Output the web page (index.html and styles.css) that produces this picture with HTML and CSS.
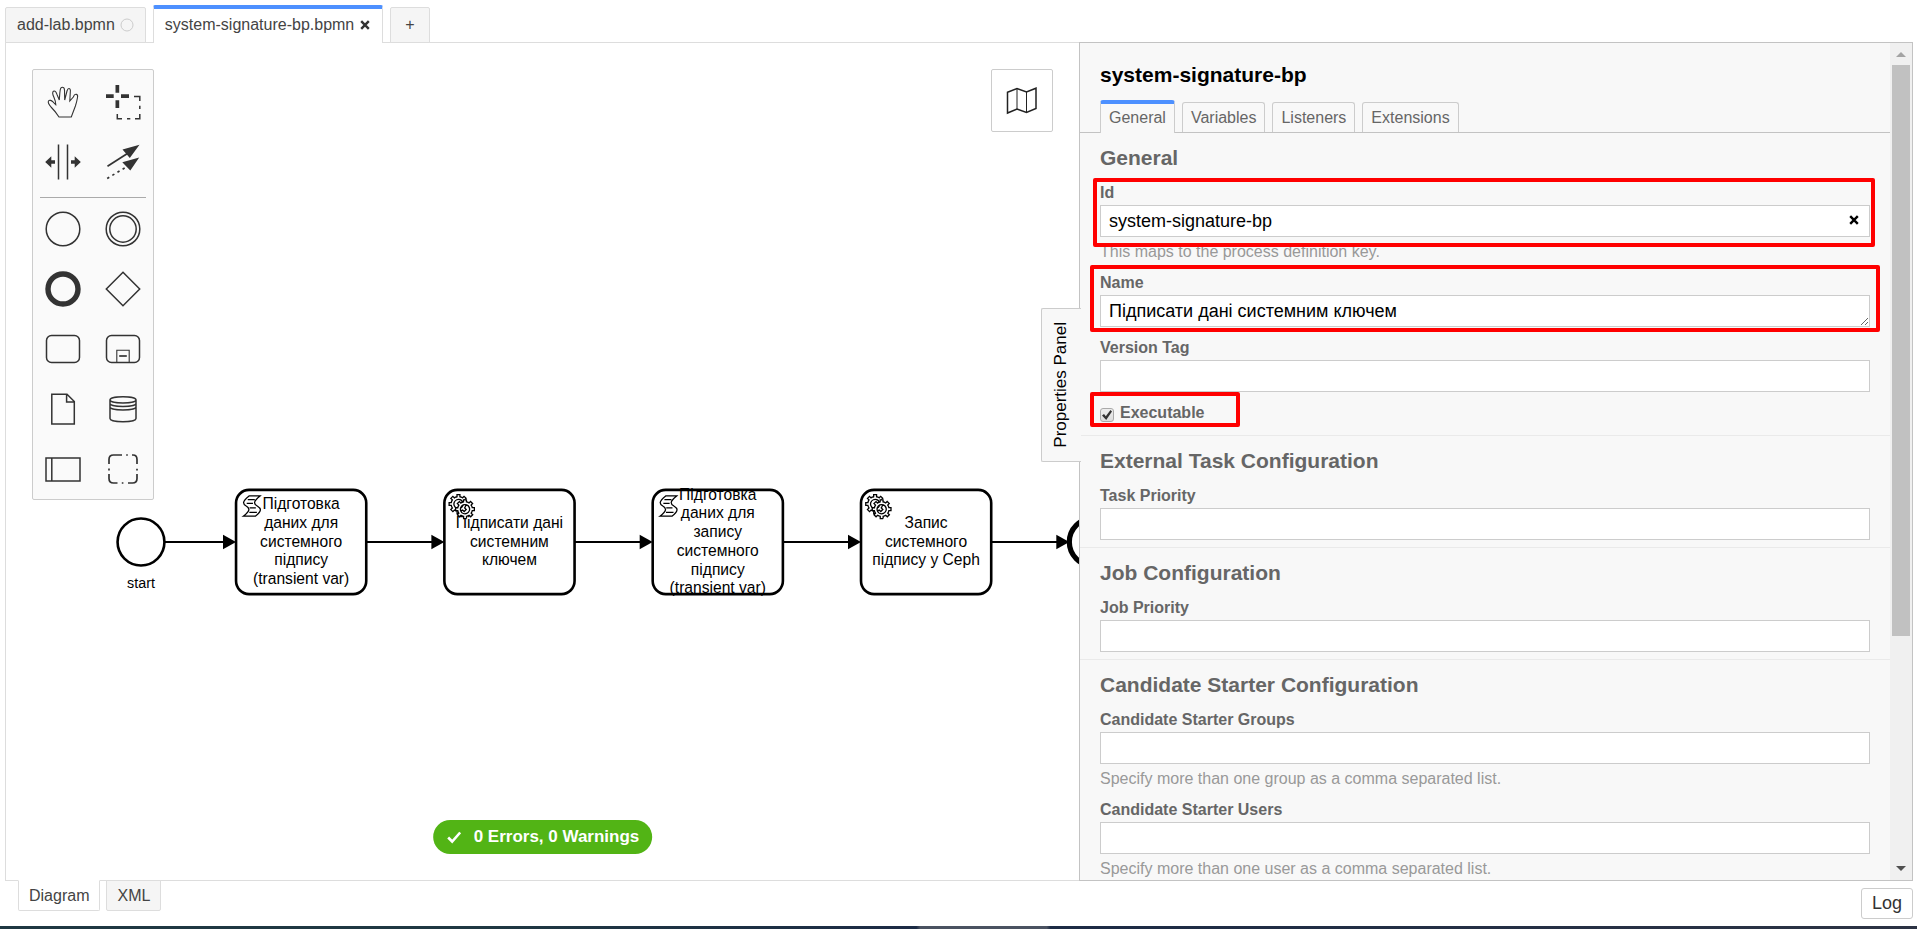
FILE: index.html
```html
<!DOCTYPE html>
<html lang="en">
<head>
<meta charset="utf-8">
<title>system-signature-bp.bpmn</title>
<link rel="stylesheet" href="styles.css">
</head>
<body>
<div class="app">
  <nav class="file-tabs" aria-label="Open files">
    <button class="file-tab" type="button">add-lab.bpmn
      <svg class="dirty-mark" viewBox="0 0 14 14" aria-hidden="true"><circle cx="7" cy="7" r="6"/></svg>
    </button>
    <button class="file-tab file-tab-active" type="button">system-signature-bp.bpmn
      <svg class="close-mark" viewBox="0 0 10 10" aria-hidden="true"><path d="M1.200 1.200 8.800 8.800M8.800 1.200 1.200 8.800"/></svg>
    </button>
    <button class="file-tab file-tab-add" type="button" aria-label="New file">+</button>
  </nav>

  <main class="workspace">
    <section class="canvas">
      <svg class="diagram" aria-label="Process diagram">
        <defs>
          <path id="gear" d="m 0,0 v -1.71335 c 0.352326,-0.0705 0.703932,-0.17838 1.047628,-0.32133 0.344416,-0.14465 0.665822,-0.32133 0.966377,-0.52145 l 1.19431,1.18005 1.567487,-1.57688 -1.195028,-1.18014 c 0.403376,-0.61394 0.683079,-1.29908 0.825447,-2.01824 l 1.622133,-0.01 v -2.2196 l -1.636514,0.01 c -0.07333,-0.35153 -0.178319,-0.70024 -0.323564,-1.04372 -0.145244,-0.34406 -0.321407,-0.6644 -0.522735,-0.96217 l 1.131035,-1.13631 -1.583305,-1.56293 -1.129598,1.13589 c -0.614052,-0.40108 -1.302883,-0.68093 -2.022633,-0.82247 l 0.0093,-1.61852 h -2.241173 l 0.0042,1.63124 c -0.353763,0.0736 -0.705369,0.17977 -1.049785,0.32371 -0.344415,0.14437 -0.665102,0.32092 -0.9635006,0.52006 l -1.1698628,-1.15823 -1.5667691,1.5792 1.1684265,1.15669 c -0.4026573,0.61283 -0.68308,1.29797 -0.8247287,2.01713 l -1.6588041,0.003 v 2.22174 l 1.6724648,-0.006 c 0.073327,0.35077 0.1797598,0.70243 0.3242851,1.04472 0.1452428,0.34448 0.3214064,0.6644 0.5227339,0.96066 l -1.1993431,1.19723 1.5840256,1.56011 1.1964668,-1.19348 c 0.6140517,0.40346 1.3028827,0.68232 2.0233517,0.82331 l 7.19e-4,1.69892 h 2.226848 z m 0.221462,-3.9957 c -1.788948,0.7502 -3.8576,-0.0928 -4.6097055,-1.87438 -0.7521065,-1.78321 0.090598,-3.84627 1.8802645,-4.59604 1.78823,-0.74936 3.856881,0.0929 4.608987,1.87437 0.752106,1.78165 -0.0906,3.84612 -1.879546,4.59605 z"/>
          <g id="service-icon">
            <use href="#gear" x="12" y="18"/>
            <use href="#gear" x="17" y="22"/>
          </g>
          <path id="script-icon" d="M14.800 20.200C20.500 16 19 14 16.300 12.400C13.500 10.600 13 9 18.400 4.600H10C4.400 9 5.200 10.700 7.800 12.400C10.500 14 11.200 16 5.600 20.200ZM9 7.400H14.400M8.200 10.300H13M10.400 13.800H15.200M10.200 17.200H16"/>
          <path id="arrow" d="M-10-5.500 0 0-10 5.500Z"/>
        </defs>
        <g class="viewport" transform="translate(135 499) scale(1.302)">
          <circle class="shape" r="18"/>
          <text class="event-label" y="35">start</text>
          <path class="flow" d="M18 0H66M173 0H226M333 0H386M493 0H546M653 0H706"/>
          <circle class="shape end-event" cx="731" r="18"/>
          <g class="arrows">
            <use href="#arrow" x="73"/><use href="#arrow" x="233"/><use href="#arrow" x="393"/><use href="#arrow" x="553"/><use href="#arrow" x="713"/>
          </g>
          <g transform="translate(73 -40)">
            <rect class="shape" width="100" height="80" rx="10"/>
            <text class="task-label"><tspan x="50" y="14.700">Підготовка</tspan><tspan x="50" dy="14.400">даних для</tspan><tspan x="50" dy="14.400">системного</tspan><tspan x="50" dy="14.400">підпису</tspan><tspan x="50" dy="14.400">(transient var)</tspan></text>
            <use class="task-icon" href="#script-icon"/>
          </g>
          <g transform="translate(233 -40)">
            <rect class="shape" width="100" height="80" rx="10"/>
            <text class="task-label"><tspan x="50" y="29.100">Підписати дані</tspan><tspan x="50" dy="14.400">системним</tspan><tspan x="50" dy="14.400">ключем</tspan></text>
            <use class="task-icon" href="#service-icon"/>
          </g>
          <g transform="translate(393 -40)">
            <rect class="shape" width="100" height="80" rx="10"/>
            <text class="task-label"><tspan x="50" y="7.500">Підготовка</tspan><tspan x="50" dy="14.400">даних для</tspan><tspan x="50" dy="14.400">запису</tspan><tspan x="50" dy="14.400">системного</tspan><tspan x="50" dy="14.400">підпису</tspan><tspan x="50" dy="14.400">(transient var)</tspan></text>
            <use class="task-icon" href="#script-icon"/>
          </g>
          <g transform="translate(553 -40)">
            <rect class="shape" width="100" height="80" rx="10"/>
            <text class="task-label"><tspan x="50" y="29.100">Запис</tspan><tspan x="50" dy="14.400">системного</tspan><tspan x="50" dy="14.400">підпису у Ceph</tspan></text>
            <use class="task-icon" href="#service-icon"/>
          </g>
        </g>
      </svg>

      <div class="palette" role="toolbar" aria-label="Palette">
        <button class="tool" type="button" aria-label="Hand tool"><svg viewBox="-18 -18 36 36"><path class="thin" d="M-4 15C-6.500 11-9.500 7.500-12 5C-13.500 3.200-15.500.5-14.500-1C-13.500-2.500-11.500-1.500-10-.2L-7.200 2.800C-7-1-9-4-10-7C-10.800-9.500-10-11-8.700-11C-7-11-6.500-9-6-7.500L-3.700-2C-3.500-5-3.300-9-2.800-12C-2.500-13.800-1.800-14.700-.6-14.700C.8-14.700 1.400-13.500 1.500-12L1.700-2L4-11C4.500-12.700 5-13.600 6-13.500C7.500-13.300 7.500-11.500 7.300-10L6.800-1L10.300-5C11-7 12-8 13.500-7.600C15-7.200 14.700-5.500 14.500-4.500C14-1.500 13.400 1 12.400 4L8.300 15Z"/></svg></button>
        <button class="tool" type="button" aria-label="Lasso tool"><svg viewBox="-18 -18 36 36"><path class="solid" d="M-17-7.800h7.700v3.700H-17zM-2-7.800h8v3.700h-8zM-7.500-17h3.700v7.700h-3.700zM-7.500-1.800h3.700v7.700h-3.700z"/><path class="line" d="M11-5.500H16.800V-1M16.800 3.700V7M16.800 12V16.700H12M7.300 16.700H4M-1 16.700H-5.700V12"/></svg></button>
        <button class="tool" type="button" aria-label="Create or remove space"><svg viewBox="-18 -18 36 36"><path class="line" d="M-4.500-17.500V17.500M4.500-17.500V17.500"/><path class="solid" d="M-17.800 0-11.700-5.700V-1.700H-8V1.700H-11.700V5.700ZM17.800 0 11.700-5.700V-1.700H8V1.700H11.700V5.700Z"/></svg></button>
        <button class="tool" type="button" aria-label="Connect"><svg viewBox="-18 -18 36 36"><path class="bold" d="M-15.500 4.300 6-9.500"/><path class="bold dots" d="M-15.800 16.500 4 4.500"/><path class="solid" d="M16.500-17.200-.5-12.500 6.800-4ZM16.200-4.500-.7.300 7.300 8.500Z"/></svg></button>
        <hr class="palette-rule">
        <button class="tool" type="button" aria-label="Start event"><svg viewBox="-18 -18 36 36"><circle class="line" r="16.800"/></svg></button>
        <button class="tool" type="button" aria-label="Intermediate event"><svg viewBox="-18 -18 36 36"><circle class="line" r="16.800"/><circle class="line" r="13.200"/></svg></button>
        <button class="tool" type="button" aria-label="End event"><svg viewBox="-18 -18 36 36"><circle class="ring" r="15"/></svg></button>
        <button class="tool" type="button" aria-label="Gateway"><svg viewBox="-18 -18 36 36"><path class="line" d="M0-16.700 16.700 0 0 16.700-16.700 0Z"/></svg></button>
        <button class="tool" type="button" aria-label="Task"><svg viewBox="-18 -18 36 36"><rect class="line" x="-16.500" y="-13.500" width="33" height="27" rx="5"/></svg></button>
        <button class="tool" type="button" aria-label="Sub process"><svg viewBox="-18 -18 36 36"><rect class="line" x="-16.500" y="-13.500" width="33" height="27" rx="5"/><path class="thin" d="M-6.200 13.500V1.200H6.200V13.500"/><path class="bold" d="M-3.800 7H3.800"/></svg></button>
        <button class="tool" type="button" aria-label="Data object"><svg viewBox="-18 -18 36 36"><path class="line" d="M-11.200-14.700H4L11.300-7.500V15H-11.200ZM3.600-14.700V-7H11.300"/></svg></button>
        <button class="tool" type="button" aria-label="Data store"><svg viewBox="-18 -18 36 36"><path class="line" d="M-13-9C-13-13.400 13-13.400 13-9C13-5 -13-5-13-9V9.500C-13 13.800 13 13.800 13 9.500V-9M-13-5.500C-13-1.500 13-1.500 13-5.500M-13-2C-13 2 13 2 13-2"/></svg></button>
        <button class="tool" type="button" aria-label="Participant"><svg viewBox="-18 -18 36 36"><path class="line" d="M-17-11H17V12H-17ZM-11.200-11V12"/></svg></button>
        <button class="tool" type="button" aria-label="Group"><svg viewBox="-18 -18 36 36"><path class="bold" d="M-14-5V-9.500Q-14-14-9.500-14H-1M3.200-14H4.800M9-14H10Q14-14 14-9.500V-5M14-.2V1.600M14 5V9.500Q14 14 9.500 14H5M.4 14H-1.200M-5.500 14H-9.500Q-14 14-14 9.500V5M-14 1.400V-.4"/></svg></button>
      </div>

      <button class="minimap-toggle" type="button" aria-label="Toggle minimap">
        <svg viewBox="0 0 32 28"><path class="map-edge" d="M1.500 5.200 11 1.500 20.500 5 30 1.200V21.500L20.500 25.500 11 22 1.500 26Z"/><path class="map-fold" d="M11 1.500V22M20.500 5V25.500"/></svg>
      </button>

      <button class="lint-badge" type="button">
        <svg viewBox="0 0 16 16" aria-hidden="true"><path d="M2 8.500 6 12.500 14 3.500"/></svg>
        <span>0 Errors, 0 Warnings</span>
      </button>
      <button class="panel-toggle" type="button"><span>Properties Panel</span></button>
    </section>

    <aside class="panel">
      <div class="panel-content">
        <h1 class="panel-title">system-signature-bp</h1>
        <nav class="panel-tabs" aria-label="Property groups">
          <button class="panel-tab panel-tab-active" type="button">General</button>
          <button class="panel-tab" type="button">Variables</button>
          <button class="panel-tab" type="button">Listeners</button>
          <button class="panel-tab" type="button">Extensions</button>
        </nav>

        <section class="group">
          <h2>General</h2>
          <div class="field">
            <div class="marked marked-id">
              <label for="id">Id</label>
              <div class="clearable">
                <input id="id" type="text" value="system-signature-bp">
                <button class="clear" type="button" aria-label="Clear"><svg viewBox="0 0 10 10"><path d="M1.200 1.200 8.800 8.800M8.800 1.200 1.200 8.800"/></svg></button>
              </div>
            </div>
            <p class="hint">This maps to the process definition key.</p>
          </div>
          <div class="field marked marked-name">
            <label for="name">Name</label>
            <textarea id="name" rows="1">Підписати дані системним ключем</textarea>
          </div>
          <div class="field">
            <label for="version">Version Tag</label>
            <input id="version" type="text">
          </div>
          <div class="field check-field marked marked-exec">
            <input id="executable" type="checkbox" checked>
            <label for="executable">Executable</label>
          </div>
        </section>

        <section class="group">
          <h2>External Task Configuration</h2>
          <div class="field">
            <label for="task-priority">Task Priority</label>
            <input id="task-priority" type="text">
          </div>
        </section>

        <section class="group">
          <h2>Job Configuration</h2>
          <div class="field">
            <label for="job-priority">Job Priority</label>
            <input id="job-priority" type="text">
          </div>
        </section>

        <section class="group">
          <h2>Candidate Starter Configuration</h2>
          <div class="field">
            <label for="starter-groups">Candidate Starter Groups</label>
            <input id="starter-groups" type="text">
            <p class="hint">Specify more than one group as a comma separated list.</p>
          </div>
          <div class="field">
            <label for="starter-users">Candidate Starter Users</label>
            <input id="starter-users" type="text">
            <p class="hint">Specify more than one user as a comma separated list.</p>
          </div>
        </section>
      </div>
      <div class="scrollbar" aria-hidden="true">
        <svg class="scroll-up" viewBox="0 0 10 5"><path d="M0 5 5 0 10 5Z"/></svg>
        <div class="scroll-track"><div class="scroll-thumb"></div></div>
        <svg class="scroll-down" viewBox="0 0 10 5"><path d="M0 0 5 5 10 0Z"/></svg>
      </div>
    </aside>
  </main>

  <footer class="footer">
    <button class="view-tab view-tab-active" type="button">Diagram</button>
    <button class="view-tab" type="button">XML</button>
    <button class="log-button" type="button">Log</button>
  </footer>
  <div class="desktop-edge"></div>
</div>
</body>
</html>
```

FILE: styles.css
```css
*,
*::before,
*::after {
  box-sizing: border-box;
}

body {
  margin: 0;
  background: #fff;
  color: #444;
  font-family: "Liberation Sans", Arial, sans-serif;
  font-size: 16px;
  line-height: 20px;
}

button,
input,
textarea {
  margin: 0;
  color: inherit;
  font: inherit;
}

.app {
  display: flex;
  flex-direction: column;
  height: 100vh;
  overflow: hidden;
}

/* File tabs */

.file-tabs {
  position: relative;
  z-index: 1;
  display: flex;
  flex: none;
  align-items: flex-end;
  gap: 7px;
  height: 43px;
  margin-bottom: -1px;
  padding-left: 5px;
}

.file-tab {
  display: flex;
  align-items: center;
  gap: 5px;
  height: 36px;
  padding: 0 11px;
  border: 1px solid #ddd;
  border-radius: 2px 2px 0 0;
  background: #f5f5f5;
}

.file-tab-active {
  height: 38px;
  padding-bottom: 2px;
  border-top: 4px solid #4d90ff;
  border-bottom: 0;
  background: #fff;
}

.file-tab-add {
  padding: 0 14px;
}

.dirty-mark {
  width: 14px;
  height: 14px;
  fill: none;
  stroke: #ccc;
}

.close-mark,
.clear svg {
  width: 10px;
  height: 10px;
  fill: none;
  stroke: #333;
  stroke-width: 2.4;
}

.close-mark {
  margin: 0 1px;
}

/* Workspace */

.workspace {
  display: flex;
  flex: 1;
  min-height: 0;
  margin: 0 4px 0 5px;
  border: 1px solid #ddd;
  border-right: 0;
}

.canvas {
  position: relative;
  flex: 1;
  min-width: 0;
}

.diagram {
  position: absolute;
  inset: 0;
  width: 100%;
  height: 100%;
}

.shape {
  fill: #fff;
  stroke: #000;
  stroke-width: 2;
}

.end-event {
  stroke-width: 4;
}

.flow {
  stroke: #000;
  stroke-width: 1.6;
}

.task-label,
.event-label {
  fill: #000;
  font-size: 12px;
  text-anchor: middle;
}

.event-label {
  font-size: 11px;
}

.task-icon {
  fill: #fff;
  stroke: #000;
  stroke-width: 1;
}

.palette {
  position: absolute;
  top: 26px;
  left: 26px;
  display: grid;
  grid-template-columns: 60px 60px;
  padding-top: 2px;
  border: 1px solid #ccc;
  border-radius: 2px;
  background: #fafafa;
}

.tool {
  display: grid;
  place-items: center;
  height: 60px;
  padding: 0;
  border: 0;
  background: none;
}

.tool svg {
  width: 36px;
  height: 36px;
  overflow: visible;
  fill: none;
  stroke: #333;
}

.palette-rule {
  grid-column: 1 / -1;
  margin: 5px 7px 1px;
  border: 0;
  border-top: 1px solid #aaa;
}

.tool .thin {
  stroke-width: 1.1;
}

.tool .line {
  stroke-width: 1.5;
}

.tool .bold {
  stroke-width: 1.7;
}

.tool .ring {
  stroke-width: 5.4;
}

.tool .dots {
  stroke-dasharray: 2.400 3.600;
}

.tool .solid {
  fill: #333;
  stroke: none;
}

.minimap-toggle {
  position: absolute;
  top: 26px;
  right: 26px;
  display: grid;
  place-items: center;
  width: 62px;
  height: 63px;
  padding: 0;
  border: 1px solid #ccc;
  border-radius: 2px;
  background: #fff;
}

.minimap-toggle svg {
  width: 32px;
  height: 28px;
  fill: none;
  stroke: #222;
}

.map-edge {
  stroke-width: 1.5;
}

.map-fold {
  stroke-width: 1;
}

.lint-badge {
  position: absolute;
  bottom: 26px;
  left: 50%;
  display: flex;
  align-items: center;
  gap: 12px;
  height: 34px;
  padding: 0 13px;
  border: 0;
  border-radius: 17px;
  background: #52b415;
  color: #fff;
  font-size: 17px;
  font-weight: 700;
  white-space: nowrap;
  transform: translateX(-50%);
}

.lint-badge svg {
  width: 16px;
  height: 16px;
  fill: none;
  stroke: #fff;
  stroke-width: 2.6;
}

.panel-toggle {
  position: absolute;
  top: 265px;
  right: -2px;
  z-index: 2;
  display: grid;
  place-items: center;
  width: 40px;
  height: 154px;
  padding: 0 2px 0 0;
  border: 1px solid #ccc;
  border-right: 0;
  border-radius: 2px 0 0 2px;
  background: #f8f8f8;
  color: #000;
  font-size: 17px;
}

.panel-toggle span {
  writing-mode: vertical-rl;
  transform: rotate(180deg);
}

/* Properties panel */

.panel {
  display: flex;
  flex: 0 0 834px;
  margin: -1px 0;
  border: 1px solid #c3c3c3;
  background: #f8f8f8;
}

.panel-content {
  flex: 1;
  min-width: 0;
  overflow: hidden;
  padding-top: 20px;
  color: #666;
}

.panel-title {
  margin: 0 20px 13px;
  color: #000;
  font-size: 21px;
  line-height: 24px;
}

.panel-tabs {
  display: flex;
  align-items: flex-end;
  gap: 7px;
  height: 33px;
  padding: 0 20px;
  border-bottom: 1px solid #c3c3c3;
}

.panel-tab {
  height: 30px;
  padding: 0 8px;
  border: 1px solid #ccc;
  border-bottom: 0;
  border-radius: 3px 3px 0 0;
  background: #f8f8f8;
}

.panel-tab-active {
  height: 33px;
  margin-bottom: -1px;
  padding-bottom: 2px;
  border-top: 4px solid #4d90ff;
}

.group {
  padding: 13px 20px 7px;
}

.group + .group {
  border-top: 1px solid #eaeaea;
}

.group h2 {
  margin: 0 0 13px;
  font-size: 21px;
  line-height: 24px;
}

.field + .field {
  margin-top: 11px;
}

.field label {
  display: block;
  margin-bottom: 2px;
  font-weight: 700;
}

.field input[type="text"],
.field textarea {
  display: block;
  width: 100%;
  height: 32px;
  padding: 4px 8px;
  border: 1px solid #ccc;
  border-radius: 0;
  background: #fff;
  color: #000;
  font-size: 18px;
  line-height: 22px;
}

.field textarea {
  overflow: hidden;
  resize: vertical;
}

.hint {
  margin: 5px 0 0;
  color: #999;
}

.clearable {
  position: relative;
}

.clear {
  position: absolute;
  top: 0;
  right: 0;
  display: grid;
  place-items: center;
  width: 32px;
  height: 30px;
  padding: 0;
  border: 0;
  background: none;
}

.clear svg {
  stroke: #000;
}

.check-field {
  display: flex;
  align-items: center;
  gap: 6px;
  padding-bottom: 5px;
}

.check-field label {
  margin: 0;
}

.check-field input {
  position: relative;
  width: 14px;
  height: 14px;
  margin-top: 4px;
  border: 1px solid #aaa;
  border-radius: 3px;
  background: linear-gradient(#eee, #ddd);
  appearance: none;
}

.check-field input:checked::before {
  position: absolute;
  inset: 1px;
  background: #333;
  clip-path: polygon(0 55%, 20% 40%, 38% 62%, 85% 0, 100% 14%, 42% 100%);
  content: "";
}

/* Highlight frames round the fields to fill in */

.marked {
  position: relative;
}

.marked::after {
  position: absolute;
  border: 4px solid #f00;
  border-radius: 2px;
  content: "";
  pointer-events: none;
}

.marked-id::after {
  inset: -5px -5px -10px -7px;
}

.marked-name::after {
  inset: -8px -10px -5px;
}

.marked-exec::after {
  top: -11px;
  bottom: 1px;
  left: -10px;
  width: 150px;
}

.scrollbar {
  display: flex;
  flex-direction: column;
  align-items: center;
  width: 22px;
  padding: 9px 2px;
  background: #f0f0f0;
}

.scrollbar svg {
  width: 10px;
  height: 5px;
}

.scroll-up {
  fill: #a3a3a3;
}

.scroll-down {
  fill: #505050;
}

.scroll-track {
  flex: 1;
  align-self: stretch;
  margin: 8px 0;
}

.scroll-thumb {
  width: 18px;
  height: 72%;
  background: #c1c1c1;
}

/* Footer */

.footer {
  position: relative;
  display: flex;
  flex: none;
  align-items: flex-start;
  gap: 6px;
  height: 46px;
  margin-top: -1px;
  padding: 0 4px 0 18px;
}

.view-tab {
  height: 31px;
  padding: 0 10px;
  border: 1px solid #ddd;
  border-radius: 0 0 2px 2px;
  background: #f5f5f5;
}

.view-tab-active {
  border-top-color: #fff;
  background: #fff;
}

.log-button {
  height: 31px;
  margin-top: 8px;
  margin-left: auto;
  padding: 0 10px 1px;
  border: 1px solid #ccc;
  border-radius: 3px;
  background: #fff;
  color: #333;
  font-size: 18px;
}

.desktop-edge {
  flex: none;
  height: 3px;
  background: linear-gradient(90deg, #1f3842 0 25%, #1c2b45 47.800%, #4a5261 48% 54.600%, #1c2b45 54.800%, #2c3344);
}
```
